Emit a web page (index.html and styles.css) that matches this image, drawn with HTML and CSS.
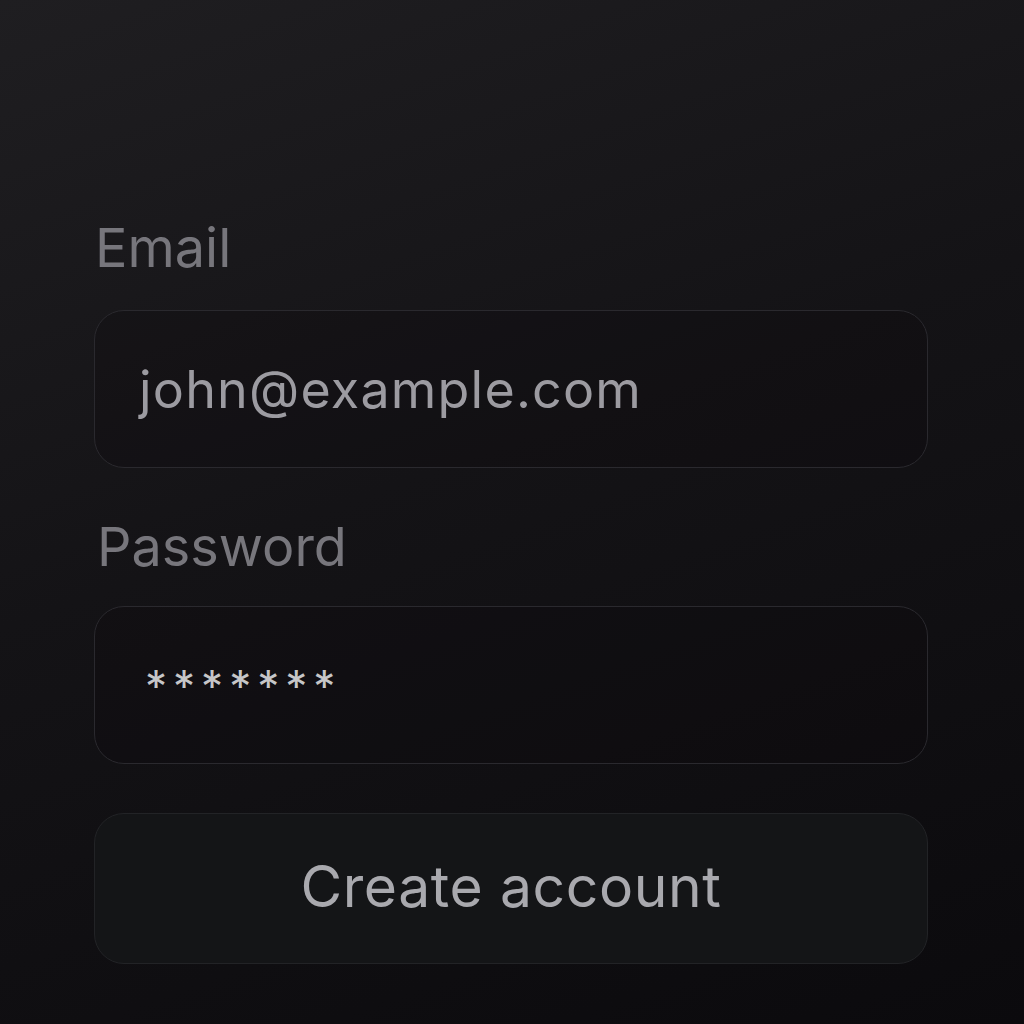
FILE: index.html
```html
<!DOCTYPE html>
<html>
<head>
<meta charset="utf-8">
<link rel="stylesheet" href="styles.css">
</head>
<body>
<main class="form">
  <label class="label label-email">Email</label>
  <div class="field"><span class="value">john@example.com</span></div>
  <label class="label label-password">Password</label>
  <div class="field"><span class="value dots">*******</span></div>
  <button class="btn">Create account</button>
</main>
</body>
</html>
```
FILE: styles.css
```css
html, body {
  margin: 0;
  height: 100%;
}
body {
  width: 1024px;
  height: 1024px;
  background: linear-gradient(160deg, #1f1e21 0%, #141316 45%, #0b0a0d 100%);
  font-family: Inter, "Noto Sans", sans-serif;
  overflow: hidden;
}
.form {
  display: flex;
  flex-direction: column;
  padding: 211px 96px 0 94px;
}
.label {
  color: #77767c;
  font-size: 54px;
  line-height: 74px;
  padding-left: 1px;
}
.label-email {
  margin-bottom: 25px;
}
.label-password {
  margin-top: 42px;
  margin-bottom: 22px;
  padding-left: 3px;
}
.field {
  height: 158px;
  box-sizing: border-box;
  border: 1px solid #2a292e;
  border-radius: 30px;
  background: rgba(10, 9, 12, 0.25);
  display: flex;
  align-items: center;
  padding-left: 44px;
}
.value {
  color: #9c9ba1;
  font-size: 52px;
  letter-spacing: 1.2px;
}
.dots {
  font-size: 44px;
  letter-spacing: 6px;
  color: #c6c6c8;
  padding-left: 6px;
  padding-top: 2px;
}
.btn {
  margin-top: 49px;
  height: 151px;
  border: 1px solid #222326;
  border-radius: 30px;
  background: #141517;
  color: #a9a9ae;
  font-family: Inter, "Noto Sans", sans-serif;
  font-size: 57px;
  letter-spacing: 0.6px;
  padding: 0 0 4px 0;
}
```
